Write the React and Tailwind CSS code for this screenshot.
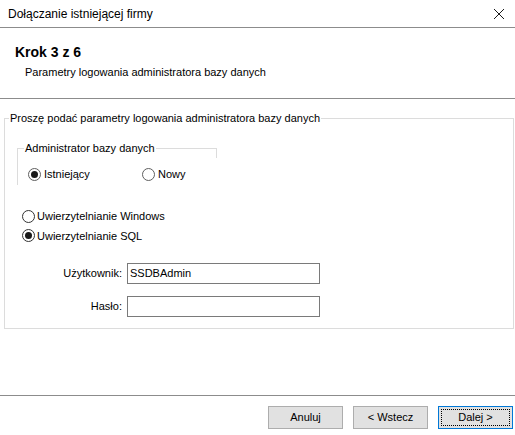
import React from 'react'

function Radio({ checked, muted, label, className = '' }) {
  return (
    <label className={`flex items-center gap-[2px] ${className}`}>
      <span
        className={`flex h-[13px] w-[13px] items-center justify-center rounded-full border bg-white ${
          muted ? 'border-[#5f5f5f]' : 'border-[#333333]'
        }`}
      >
        {checked && <span className="h-[7px] w-[7px] rounded-full bg-[#1a1a1a]" />}
      </span>
      <span>{label}</span>
    </label>
  )
}

function Button({ children, focused }) {
  return (
    <button
      className={`flex h-[23px] w-[75px] items-center justify-center border bg-[#e1e1e1] p-[2px] ${
        focused ? 'border-[#0078d7]' : 'border-[#adadad]'
      }`}
    >
      <span
        className={`flex h-full w-full items-center justify-center ${
          focused ? 'border border-dotted border-black' : ''
        }`}
      >
        {children}
      </span>
    </button>
  )
}

export default function App() {
  return (
    <div
      className="flex h-[435px] w-[515px] flex-col bg-white text-[11px] text-black"
      style={{ fontFamily: '"Liberation Sans", Arial, sans-serif' }}
    >
      {/* Title bar */}
      <div className="flex h-[28px] items-center justify-between border-b border-[#8c8c8c] pl-[8px] pr-[5px]">
        <span className="text-[12px]">Dołączanie istniejącej firmy</span>
        <svg width="20" height="20" viewBox="0 0 20 20" className="mr-[1px]">
          <path d="M5 5 L15 15 M15 5 L5 15" stroke="#1a1a1a" strokeWidth="1" />
        </svg>
      </div>

      {/* Step header */}
      <div className="flex h-[71px] flex-col border-b border-[#8c8c8c] pl-[15px] pt-[15px]">
        <span className="text-[14px] font-bold leading-[18px]">Krok 3 z 6</span>
        <span className="pl-[10px] pt-[4px] leading-[14px]">Parametry logowania administratora bazy danych</span>
      </div>

      {/* Body */}
      <div className="flex-1 pt-[12px]">
        <fieldset className="ml-[4px] mr-[1px] border border-[#dcdcdc] pb-[11px] pl-[4px]">
          <legend className="px-[1px] leading-[14px]">Proszę podać parametry logowania administratora bazy danych</legend>

          {/* Administrator group */}
          <div className="relative ml-[8px] mt-[23px] h-[37px] w-[200px] border-l border-t border-[#dcdcdc] pl-[10px]">
            <span className="absolute left-[6px] top-[-8px] bg-white px-[1px] leading-[14px]">Administrator bazy danych</span>
            <span className="absolute right-0 top-[-1px] h-[10px] w-px bg-[#dcdcdc]" />
            <div className="mt-[17px] flex items-center">
              <Radio checked muted label="Istniejący" className="w-[114px] gap-[3px]" />
              <Radio muted label="Nowy" className="gap-[3px]" />
            </div>
          </div>

          <div className="ml-[13px] mt-[23px] flex flex-col gap-[3px]">
            <Radio label="Uwierzytelnianie Windows" />
            <Radio checked label="Uwierzytelnianie SQL" />
          </div>

          <div className="mt-[19px] flex flex-col gap-[12px]">
            <div className="flex items-center">
              <span className="w-[118px] pr-[5px] text-right">Użytkownik:</span>
              <div className="flex h-[21px] w-[193px] items-center border border-[#7a7a7a] px-[2px]">SSDBAdmin</div>
            </div>
            <div className="flex items-center">
              <span className="w-[118px] pr-[5px] text-right">Hasło:</span>
              <div className="h-[21px] w-[193px] border border-[#7a7a7a]" />
            </div>
          </div>
        </fieldset>
      </div>

      {/* Footer */}
      <div className="flex h-[40px] items-start justify-end gap-[10px] border-t border-[#8c8c8c] pr-[2px] pt-[10px]">
        <Button>Anuluj</Button>
        <Button>&lt; Wstecz</Button>
        <Button focused>Dalej &gt;</Button>
      </div>
    </div>
  )
}
